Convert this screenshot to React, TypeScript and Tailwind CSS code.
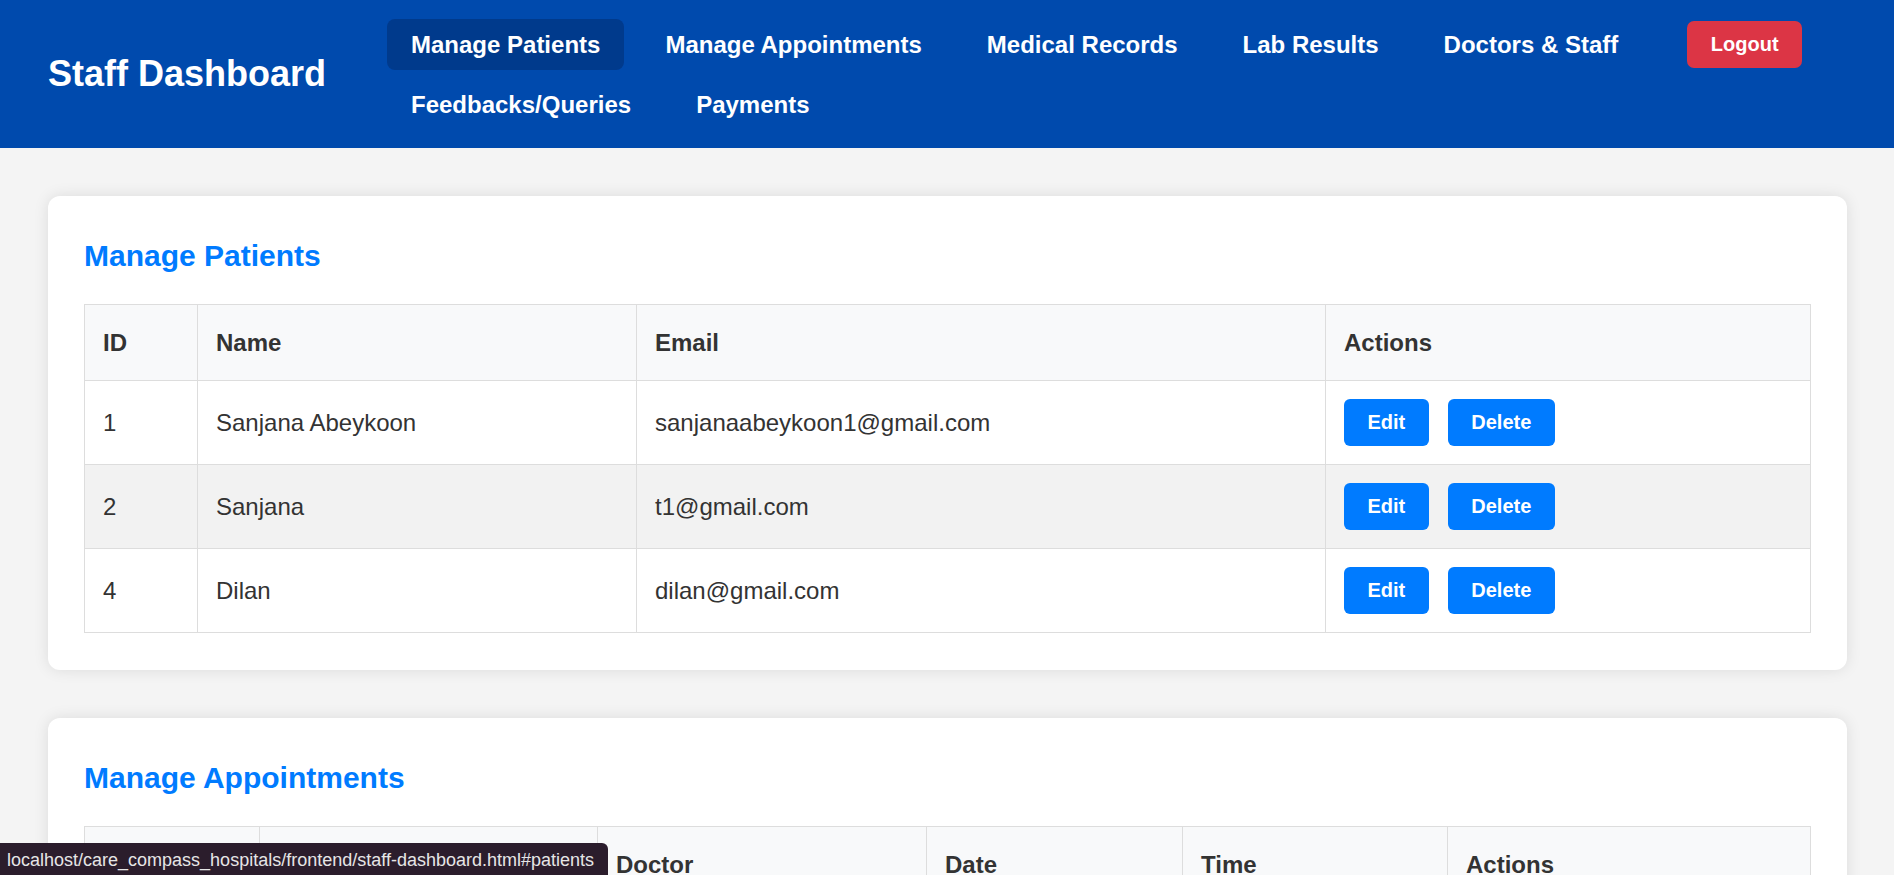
import React from "react";

const navRow1 = ["Manage Patients", "Manage Appointments", "Medical Records", "Lab Results", "Doctors & Staff"];
const navRow2 = ["Feedbacks/Queries", "Payments"];

const patients = [
  { id: 1, name: "Sanjana Abeykoon", email: "sanjanaabeykoon1@gmail.com" },
  { id: 2, name: "Sanjana", email: "t1@gmail.com" },
  { id: 4, name: "Dilan", email: "dilan@gmail.com" },
];

const appointments = [
  { id: 1, patient: "Sanjana Abeykoon", doctor: "Dr. Perera", date: "2025-03-10", time: "10:00:00" },
  { id: 2, patient: "Dilan", doctor: "Dr. Silva", date: "2025-03-12", time: "14:30:00" },
];

function NavTab({ label, active }: { label: string; active?: boolean }) {
  return (
    <a
      href="#patients"
      className={
        "block px-[24px] py-[12px] text-[24px] leading-[27px] font-bold text-white rounded-[8px] whitespace-nowrap " +
        (active ? "bg-[#003a8c]" : "")
      }
    >
      {label}
    </a>
  );
}

function ActionButtons() {
  return (
    <div className="flex gap-[19px]">
      <button className="bg-[#007bff] text-white font-bold text-[20px] leading-[23px] px-[23.5px] py-[12px] rounded-[6px]">
        Edit
      </button>
      <button className="bg-[#007bff] text-white font-bold text-[20px] leading-[23px] px-[23.5px] py-[12px] rounded-[6px]">
        Delete
      </button>
    </div>
  );
}

export default function App() {
  return (
    <div className="relative h-[875px] overflow-hidden bg-[#f4f4f4] text-[#333] font-['Liberation_Sans',Arial,sans-serif]">
      <header className="h-[148px] bg-[#004aad] flex items-center pl-[48px]">
        <h1 className="w-[339px] text-[36px] leading-[36px] font-bold text-white whitespace-nowrap">Staff Dashboard</h1>
        <nav className="flex flex-col gap-[9px]">
          <div className="flex items-center gap-[17px]">
            {navRow1.map((l, i) => (
              <NavTab key={l} label={l} active={i === 0} />
            ))}
            <button className="ml-[28px] bg-[#dc3545] text-white font-bold text-[20px] leading-[23px] px-[23.5px] py-[12px] rounded-[7px]">
              Logout
            </button>
          </div>
          <div className="flex items-center gap-[17px]">
            {navRow2.map((l) => (
              <NavTab key={l} label={l} />
            ))}
          </div>
        </nav>
      </header>

      <main className="pt-[48px] ml-[48px] mr-[47px] flex flex-col gap-[48px]">
        <section className="bg-white rounded-[12px] shadow-[0_0_15px_rgba(0,0,0,0.1)] px-[36px] pt-[43px] pb-[37px]">
          <h2 className="text-[30px] leading-[34px] font-bold text-[#007bff] mb-[31px]">Manage Patients</h2>
          <table className="w-full table-fixed border-collapse text-[24px] leading-[28px]">
            <colgroup>
              <col className="w-[113px]" />
              <col className="w-[439px]" />
              <col className="w-[689px]" />
              <col />
            </colgroup>
            <thead>
              <tr className="h-[76px] bg-[#f8f9fa]">
                <th className="border border-[#dddddd] px-[18px] text-left font-bold">ID</th>
                <th className="border border-[#dddddd] px-[18px] text-left font-bold">Name</th>
                <th className="border border-[#dddddd] px-[18px] text-left font-bold">Email</th>
                <th className="border border-[#dddddd] px-[18px] text-left font-bold">Actions</th>
              </tr>
            </thead>
            <tbody>
              {patients.map((p, i) => (
                <tr key={p.id} className={"h-[84px] " + (i === 1 ? "bg-[#f2f2f2]" : "bg-white")}>
                  <td className="border border-[#dddddd] px-[18px]">{p.id}</td>
                  <td className="border border-[#dddddd] px-[18px]">{p.name}</td>
                  <td className="border border-[#dddddd] px-[18px]">{p.email}</td>
                  <td className="border border-[#dddddd] px-[18px]">
                    <ActionButtons />
                  </td>
                </tr>
              ))}
            </tbody>
          </table>
        </section>

        <section className="bg-white rounded-[12px] shadow-[0_0_15px_rgba(0,0,0,0.1)] px-[36px] pt-[43px] pb-[37px]">
          <h2 className="text-[30px] leading-[34px] font-bold text-[#007bff] mb-[31px]">Manage Appointments</h2>
          <table className="w-full table-fixed border-collapse text-[24px] leading-[28px]">
            <colgroup>
              <col className="w-[175px]" />
              <col className="w-[338px]" />
              <col className="w-[329px]" />
              <col className="w-[256px]" />
              <col className="w-[265px]" />
              <col />
            </colgroup>
            <thead>
              <tr className="h-[76px] bg-[#f8f9fa]">
                <th className="border border-[#dddddd] px-[18px] text-left font-bold">ID</th>
                <th className="border border-[#dddddd] px-[18px] text-left font-bold">Patient</th>
                <th className="border border-[#dddddd] px-[18px] text-left font-bold">Doctor</th>
                <th className="border border-[#dddddd] px-[18px] text-left font-bold">Date</th>
                <th className="border border-[#dddddd] px-[18px] text-left font-bold">Time</th>
                <th className="border border-[#dddddd] px-[18px] text-left font-bold">Actions</th>
              </tr>
            </thead>
            <tbody>
              {appointments.map((a, i) => (
                <tr key={a.id} className={"h-[84px] " + (i === 1 ? "bg-[#f2f2f2]" : "bg-white")}>
                  <td className="border border-[#dddddd] px-[18px]">{a.id}</td>
                  <td className="border border-[#dddddd] px-[18px]">{a.patient}</td>
                  <td className="border border-[#dddddd] px-[18px]">{a.doctor}</td>
                  <td className="border border-[#dddddd] px-[18px]">{a.date}</td>
                  <td className="border border-[#dddddd] px-[18px]">{a.time}</td>
                  <td className="border border-[#dddddd] px-[18px]">
                    <ActionButtons />
                  </td>
                </tr>
              ))}
            </tbody>
          </table>
        </section>
      </main>

      <div className="absolute left-0 bottom-0 h-[32px] w-[608px] bg-[#2b1d2c] rounded-tr-[6px] pl-[7px] pt-[2px] text-[18px] leading-[30px] text-[#e6e6e6] whitespace-nowrap font-['Liberation_Sans',Arial,sans-serif]">
        localhost/care_compass_hospitals/frontend/staff-dashboard.html#patients
      </div>
    </div>
  );
}
